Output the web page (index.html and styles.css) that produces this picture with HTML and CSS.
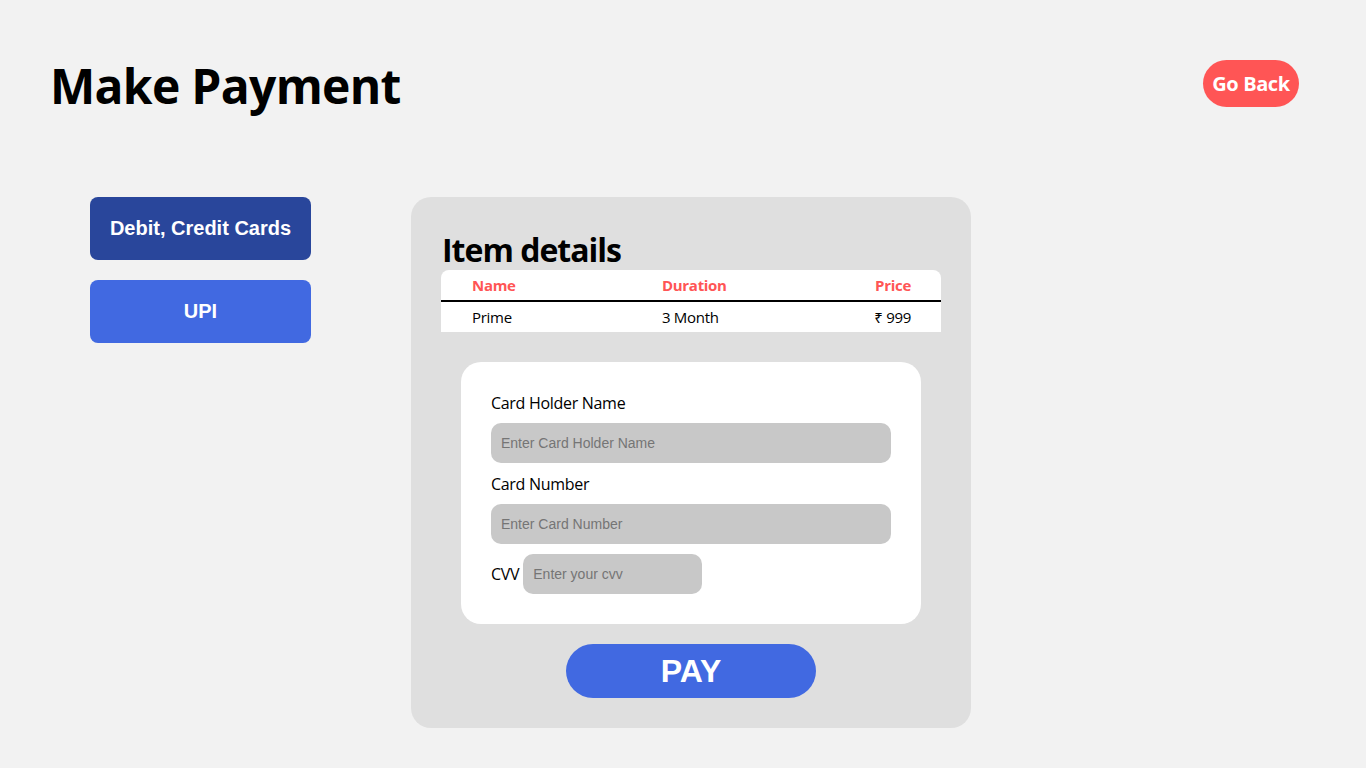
FILE: index.html
```html
<!DOCTYPE html>
<html lang="en">
<head>
<meta charset="utf-8">
<title>Make Payment</title>
<link rel="stylesheet" href="styles.css">
</head>
<body>
<header class="top">
  <h1 class="title">Make Payment</h1>
  <button class="back-btn">Go Back</button>
</header>
<main class="main">
  <nav class="methods">
    <button class="method method-active">Debit, Credit Cards</button>
    <button class="method">UPI</button>
  </nav>
  <section class="panel">
    <h2 class="panel-title">Item details</h2>
    <table class="items">
      <colgroup>
        <col class="col-name">
        <col class="col-dur">
        <col class="col-price">
      </colgroup>
      <thead>
        <tr><th class="c-name">Name</th><th class="c-dur">Duration</th><th class="c-price">Price</th></tr>
      </thead>
      <tbody>
        <tr><td class="c-name">Prime</td><td class="c-dur">3 Month</td><td class="c-price">₹ 999</td></tr>
      </tbody>
    </table>
    <form class="card-form">
      <label class="field-label" for="holder">Card Holder Name</label>
      <input class="field" id="holder" type="text" placeholder="Enter Card Holder Name">
      <label class="field-label" for="number">Card Number</label>
      <input class="field" id="number" type="text" placeholder="Enter Card Number">
      <div class="cvv-row">
        <label class="cvv-label" for="cvv">CVV</label>
        <input class="field field-cvv" id="cvv" type="text" placeholder="Enter your cvv">
      </div>
    </form>
    <div class="pay-wrap">
      <button class="pay-btn">PAY</button>
    </div>
  </section>
</main>
</body>
</html>
```

FILE: styles.css
```css
html, body {
  margin: 0;
  padding: 0;
}
body {
  background: #f2f2f2;
  font-family: "Open Sans", "Noto Sans", sans-serif;
  color: #000;
  padding-bottom: 85px;
}
.top {
  display: flex;
  justify-content: space-between;
  align-items: center;
  padding: 60px 67px 0 50px;
  height: 47px;
}
.title {
  margin: 0;
  padding-top: 3px;
  font-size: 48px;
  font-weight: 700;
  line-height: 47px;
  letter-spacing: -0.7px;
}
.back-btn {
  background: #ff5555;
  color: #fff;
  border: none;
  border-radius: 24px;
  width: 96px;
  height: 47px;
  padding: 0;
  font-family: "Open Sans", "Noto Sans", sans-serif;
  font-size: 20px;
  font-weight: 700;
  letter-spacing: -0.4px;
}
.main {
  display: flex;
  align-items: flex-start;
  margin-top: 90px;
  padding-left: 90px;
  gap: 100px;
}
.methods {
  display: flex;
  flex-direction: column;
  gap: 20px;
}
.method {
  width: 221px;
  height: 63px;
  border: none;
  border-radius: 8px;
  background: #4169e1;
  color: #fff;
  font-family: "Liberation Sans", Arial, sans-serif;
  font-size: 20px;
  font-weight: 700;
  padding: 0;
}
.method-active {
  background: #29469b;
}
.panel {
  width: 500px;
  background: #dfdfdf;
  border-radius: 20px;
  padding: 37px 30px 30px 30px;
}
.panel-title {
  margin: 0 0 4px 1px;
  font-size: 32px;
  font-weight: 700;
  line-height: 32px;
  letter-spacing: -1px;
}
.items {
  width: 500px;
  table-layout: fixed;
  border-collapse: separate;
  border-spacing: 0;
  background: #fff;
  border-radius: 8px 8px 0 0;
  font-size: 15px;
  letter-spacing: -0.3px;
}
.col-name { width: 221px; }
.col-price { width: 100px; }
.items th {
  color: #ff5555;
  font-weight: 700;
  height: 30px;
  padding: 0;
  border-bottom: 2px solid #000;
}
.items td {
  height: 30px;
  padding: 0;
}
.items .c-name {
  text-align: left;
  padding-left: 31px;
}
.items .c-dur {
  text-align: left;
}
.items .c-price {
  text-align: right;
  padding-right: 30px;
}
.card-form {
  margin: 30px 20px 0 20px;
  background: #fff;
  border-radius: 20px;
  padding: 30px;
  display: flex;
  flex-direction: column;
  align-items: flex-start;
}
.field-label {
  font-size: 16px;
  line-height: 22px;
  margin-bottom: 9px;
  letter-spacing: -0.3px;
}
.field {
  box-sizing: border-box;
  width: 400px;
  height: 40px;
  border: none;
  border-radius: 10px;
  background: #c8c8c8;
  padding: 0 10px;
  margin: 0 0 10px 0;
  font-family: "Liberation Sans", Arial, sans-serif;
  font-size: 14px;
  color: #000;
  outline: none;
}
.field::placeholder {
  color: #757575;
}
.cvv-row {
  display: flex;
  align-items: center;
  gap: 4px;
}
.cvv-label {
  font-size: 16px;
  letter-spacing: -0.3px;
}
.field-cvv {
  width: 179px;
  margin: 0;
}
.pay-wrap {
  display: flex;
  justify-content: center;
  margin-top: 20px;
}
.pay-btn {
  width: 250px;
  height: 54px;
  border: none;
  border-radius: 27px;
  background: #4169e1;
  color: #fff;
  font-family: "Liberation Sans", Arial, sans-serif;
  font-size: 32px;
  font-weight: 700;
  padding: 0;
}
```
